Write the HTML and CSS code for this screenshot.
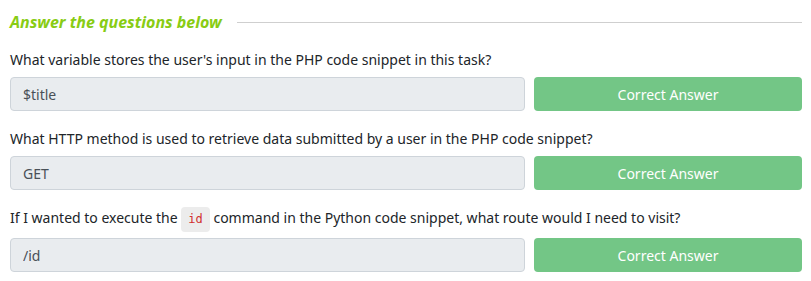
FILE: index.html
```html
<!DOCTYPE html>
<html lang="en">
<head>
    <meta charset="UTF-8">
    <meta name="viewport" content="width=device-width, initial-scale=1.0">
    <title>Task Questions</title>
    <link rel="stylesheet" href="styles.css">
</head>
<body>
    <div class="container">
        <div class="section-title">
            <h3>Answer the questions below</h3>
            <span class="rule"></span>
        </div>

        <div class="question">
            <p>What variable stores the user's input in the PHP code snippet in this task?</p>
            <div class="answer-row">
                <input type="text" class="answer" value="$title" readonly>
                <button class="btn-correct">Correct Answer</button>
            </div>
        </div>

        <div class="question">
            <p>What HTTP method is used to retrieve data submitted by a user in the PHP code snippet?</p>
            <div class="answer-row">
                <input type="text" class="answer" value="GET" readonly>
                <button class="btn-correct">Correct Answer</button>
            </div>
        </div>

        <div class="question">
            <p>If I wanted to execute the <code>id</code> command in the Python code snippet, what route would I need to visit?</p>
            <div class="answer-row">
                <input type="text" class="answer" value="/id" readonly>
                <button class="btn-correct">Correct Answer</button>
            </div>
        </div>
    </div>
</body>
</html>
```

FILE: styles.css
```css
body {
    margin: 0;
    font-family: "Noto Sans", "Open Sans", sans-serif;
    font-size: 14px;
    color: #212529;
    background-color: #fff;
}
.container {
    padding: 12px 9px 0 10px;
}
.section-title {
    display: flex;
    align-items: center;
    gap: 15px;
    height: 20px;
    margin-bottom: 1px;
}
.section-title h3 {
    margin: 0;
    font-size: 16px;
    font-style: italic;
    font-weight: bold;
    color: #88cc14;
    white-space: nowrap;
}
.section-title .rule {
    flex: 1;
    border-top: 1px solid #cfcfcf;
}
.question p {
    margin: 17px 0 6px;
    line-height: 22px;
}
.answer-row {
    display: flex;
    gap: 9px;
}
.answer {
    flex: 0 0 515px;
    box-sizing: border-box;
    height: 34px;
    padding: 0 12px;
    font-family: inherit;
    font-size: 14px;
    color: #495057;
    background-color: #e9ecef;
    border: 1px solid #ced4da;
    border-radius: 4px;
    outline: none;
}
.btn-correct {
    flex: 1;
    height: 34px;
    font-family: inherit;
    font-size: 14px;
    color: #fff;
    background-color: #73c686;
    border: none;
    border-radius: 4px;
}
code {
    display: inline-block;
    font-family: "DejaVu Sans Mono", monospace;
    font-size: 12px;
    line-height: 19px;
    color: #d12f2f;
    background-color: #ececec;
    padding: 3px 7px;
    border-radius: 4px;
}
```
